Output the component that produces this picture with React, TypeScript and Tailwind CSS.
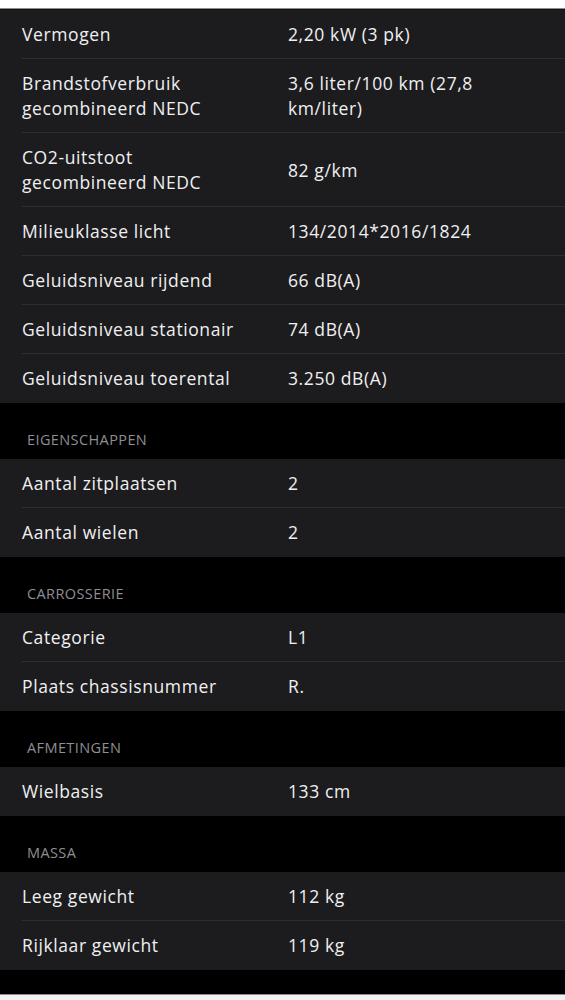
const groups: { title?: string; rows: [string, string][] }[] = [
    {
        rows: [
            ['Vermogen', '2,20 kW (3 pk)'],
            ['Brandstofverbruik gecombineerd NEDC', '3,6 liter/100 km (27,8 km/liter)'],
            ['CO2-uitstoot gecombineerd NEDC', '82 g/km'],
            ['Milieuklasse licht', '134/2014*2016/1824'],
            ['Geluidsniveau rijdend', '66 dB(A)'],
            ['Geluidsniveau stationair', '74 dB(A)'],
            ['Geluidsniveau toerental', '3.250 dB(A)'],
        ],
    },
    {
        title: 'Eigenschappen',
        rows: [
            ['Aantal zitplaatsen', '2'],
            ['Aantal wielen', '2'],
        ],
    },
    {
        title: 'Carrosserie',
        rows: [
            ['Categorie', 'L1'],
            ['Plaats chassisnummer', 'R.'],
        ],
    },
    {
        title: 'Afmetingen',
        rows: [['Wielbasis', '133 cm']],
    },
    {
        title: 'Massa',
        rows: [
            ['Leeg gewicht', '112 kg'],
            ['Rijklaar gewicht', '119 kg'],
        ],
    },
]

function Row({ label, value, last }: { label: string; value: string; last: boolean }) {
    return (
        <div className="pl-[22px] bg-[#1c1c1e]">
            <div className={`flex items-center pt-3 ${last ? 'pb-[12px]' : 'pb-[11px] border-b border-[#2e2e31]'}`}>
                <div className="w-[266px] pr-[32px] text-[17.5px] leading-[25px] tracking-[0.6px] text-[#f0f0f2]">{label}</div>
                <div className="flex-1 pr-[40px] text-[17.5px] leading-[25px] tracking-[0.6px] text-[#f0f0f2]">{value}</div>
            </div>
        </div>
    )
}

export default function App() {
    return (
        <div className="w-[565px] h-[1000px] overflow-hidden bg-black" style={{ fontFamily: '"Open Sans", Lato, sans-serif' }}>
            <div className="h-[8px] bg-white" />
            <div className="h-[1px] bg-[#8c8c8c]" />
            <div className="h-[1px] bg-[#111113]" />
            {groups.map((g, gi) => (
                <div key={gi}>
                    {g.title && (
                        <div className="bg-black pl-[27px] pt-[28px] pb-[10px] text-[14.5px] leading-[18px] tracking-[0.4px] uppercase text-[#8e8e93]">
                            {g.title}
                        </div>
                    )}
                    {g.rows.map(([l, v], i) => (
                        <Row key={l} label={l} value={v} last={i === g.rows.length - 1} />
                    ))}
                </div>
            ))}
            <div className="h-[24px] bg-black" />
            <div className="h-[1px] bg-[#8c8c8c]" />
            <div className="h-[10px] bg-[#f2f2f2]" />
        </div>
    )
}
